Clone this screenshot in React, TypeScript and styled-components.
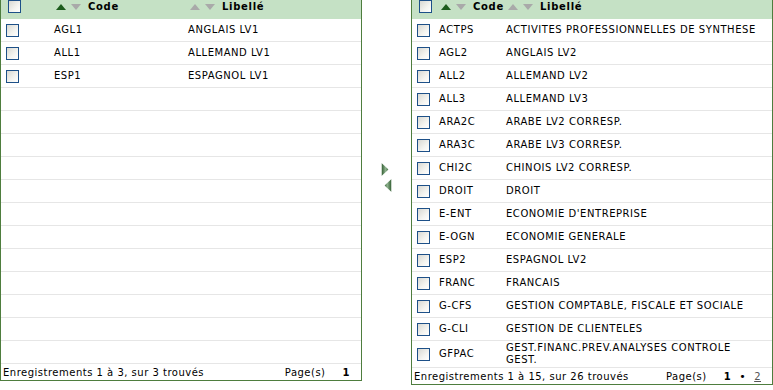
import styled, { createGlobalStyle } from 'styled-components';

const GlobalStyle = createGlobalStyle`
    body {
        margin: 0;
        background: #fff;
        font-family: "DejaVu Sans", Verdana, sans-serif;
        font-size: 10px;
        color: #000;
    }
`;

const Page = styled.div`
    display: flex;
    align-items: stretch;
`;

const Panel = styled.div`
    width: 362px;
    box-sizing: border-box;
    border: 1px solid #4e7d3e;
    border-top: none;
    align-self: flex-start;
`;

const Header = styled.div<{ $cols: string }>`
    display: grid;
    grid-template-columns: ${p => p.$cols};
    height: 19px;
    background: #c5e1c5;
    align-items: start;
`;

const HeaderCell = styled.div`
    display: flex;
    align-items: center;
    height: 13px;
    padding-left: 5px;
    font-weight: bold;
    letter-spacing: 0.7px;
    white-space: nowrap;
`;

const SortIcon = styled.svg`
    display: block;
    flex: none;
    margin-right: 5px;
    &:nth-of-type(2) {
        margin-right: 7px;
    }
`;

const Row = styled.div<{ $cols: string }>`
    display: grid;
    grid-template-columns: ${p => p.$cols};
    min-height: 22px;
    border-bottom: 1px solid #e6e6e6;
    align-items: center;
`;

const Cell = styled.div`
    padding: 1px 10px 1px 3px;
    letter-spacing: 0.55px;
    line-height: 12px;
`;

const Check = styled.span<{ $head?: boolean }>`
    display: block;
    width: 13px;
    height: 13px;
    box-sizing: border-box;
    margin-left: ${p => (p.$head ? '7px' : '5px')};
    border: 1px solid #1d5088;
    background: linear-gradient(135deg, #d8d8d2 0%, #f4f4f0 60%, #fff 100%);
`;

const Footer = styled.div<{ $pad: number }>`
    display: flex;
    justify-content: space-between;
    align-items: center;
    height: 16px;
    padding: 0 ${p => p.$pad}px 0 2px;
    letter-spacing: 0.5px;
    white-space: nowrap;
`;

const Pages = styled.span`
    display: flex;
    align-items: center;
    gap: 8px;
`;

const Current = styled.b`
    margin-left: 9px;
`;

const Dot = styled.span`
    font-size: 11px;
`;

const PageLink = styled.span`
    color: #555;
    text-decoration: underline;
`;

const Mover = styled.div`
    width: 49px;
    display: flex;
    flex-direction: column;
    align-items: center;
    padding-top: 163px;
    gap: 3px;
`;

const MoveArrow = styled.svg<{ $shift: number }>`
    display: block;
    transform: translateX(${p => p.$shift}px);
`;

const leftRows = [
    { code: 'AGL1', label: 'ANGLAIS LV1' },
    { code: 'ALL1', label: 'ALLEMAND LV1' },
    { code: 'ESP1', label: 'ESPAGNOL LV1' },
];

const rightRows = [
    { code: 'ACTPS', label: 'ACTIVITES PROFESSIONNELLES DE SYNTHESE' },
    { code: 'AGL2', label: 'ANGLAIS LV2' },
    { code: 'ALL2', label: 'ALLEMAND LV2' },
    { code: 'ALL3', label: 'ALLEMAND LV3' },
    { code: 'ARA2C', label: 'ARABE LV2 CORRESP.' },
    { code: 'ARA3C', label: 'ARABE LV3 CORRESP.' },
    { code: 'CHI2C', label: 'CHINOIS LV2 CORRESP.' },
    { code: 'DROIT', label: 'DROIT' },
    { code: 'E-ENT', label: "ECONOMIE D'ENTREPRISE" },
    { code: 'E-OGN', label: 'ECONOMIE GENERALE' },
    { code: 'ESP2', label: 'ESPAGNOL LV2' },
    { code: 'FRANC', label: 'FRANCAIS' },
    { code: 'G-CFS', label: 'GESTION COMPTABLE, FISCALE ET SOCIALE' },
    { code: 'G-CLI', label: 'GESTION DE CLIENTELES' },
    { code: 'GFPAC', label: 'GEST.FINANC.PREV.ANALYSES CONTROLE GEST.' },
];

function Sort({ active }: { active?: boolean }) {
    return (
        <>
            <SortIcon width="10" height="6" viewBox="0 0 10 6">
                <polygon points="0,6 5,0 10,6" fill={active ? '#1d5c1d' : '#a9a9a9'} />
            </SortIcon>
            <SortIcon width="10" height="6" viewBox="0 0 10 6">
                <polygon points="0,0 10,0 5,6" fill="#a9a9a9" />
            </SortIcon>
        </>
    );
}

function Grid({ rows, cols, total, empty, pad, pages }: {
    rows: { code: string; label: string }[];
    cols: string;
    total: string;
    empty: number;
    pad: number;
    pages: React.ReactNode;
}) {
    return (
        <Panel>
            <Header $cols={cols}>
                <Check $head />
                <HeaderCell><Sort active />Code</HeaderCell>
                <HeaderCell><Sort />Libellé</HeaderCell>
            </Header>
            {rows.map(r => (
                <Row $cols={cols} key={r.code}>
                    <Check />
                    <Cell>{r.code}</Cell>
                    <Cell>{r.label}</Cell>
                </Row>
            ))}
            {Array.from({ length: empty }).map((_, i) => (
                <Row $cols={cols} key={'e' + i} />
            ))}
            <Footer $pad={pad}>
                <span>{total}</span>
                {pages}
            </Footer>
        </Panel>
    );
}

export default function App() {
    return (
        <>
            <GlobalStyle />
            <Page>
                <Grid
                    rows={leftRows}
                    cols="50px 134px 1fr"
                    total="Enregistrements 1 à 3, sur 3 trouvés"
                    empty={12}
                    pad={11}
                    pages={<Pages>Page(s)<Current>1</Current></Pages>}
                />
                <Mover>
                    <MoveArrow $shift={-1.5} width="7" height="13" viewBox="0 0 7 13">
                        <defs>
                            <linearGradient id="mvR" x1="0" y1="0" x2="1" y2="0">
                                <stop offset="0" stopColor="#2f5b2f" />
                                <stop offset="0.6" stopColor="#8fb28f" />
                                <stop offset="1" stopColor="#3d6a3d" />
                            </linearGradient>
                        </defs>
                        <polygon points="0,0 7,6.5 0,13" fill="url(#mvR)" />
                    </MoveArrow>
                    <MoveArrow $shift={1.5} width="7" height="13" viewBox="0 0 7 13">
                        <defs>
                            <linearGradient id="mvL" x1="0" y1="0" x2="1" y2="0">
                                <stop offset="0" stopColor="#3d6a3d" />
                                <stop offset="0.4" stopColor="#8fb28f" />
                                <stop offset="1" stopColor="#2f5b2f" />
                            </linearGradient>
                        </defs>
                        <polygon points="7,0 0,6.5 7,13" fill="url(#mvL)" />
                    </MoveArrow>
                </Mover>
                <Grid
                    rows={rightRows}
                    cols="24px 67px 1fr"
                    total="Enregistrements 1 à 15, sur 26 trouvés"
                    empty={0}
                    pad={11}
                    pages={
                        <Pages>
                            Page(s)<Current>1</Current><Dot>•</Dot><PageLink>2</PageLink>
                        </Pages>
                    }
                />
            </Page>
        </>
    );
}
